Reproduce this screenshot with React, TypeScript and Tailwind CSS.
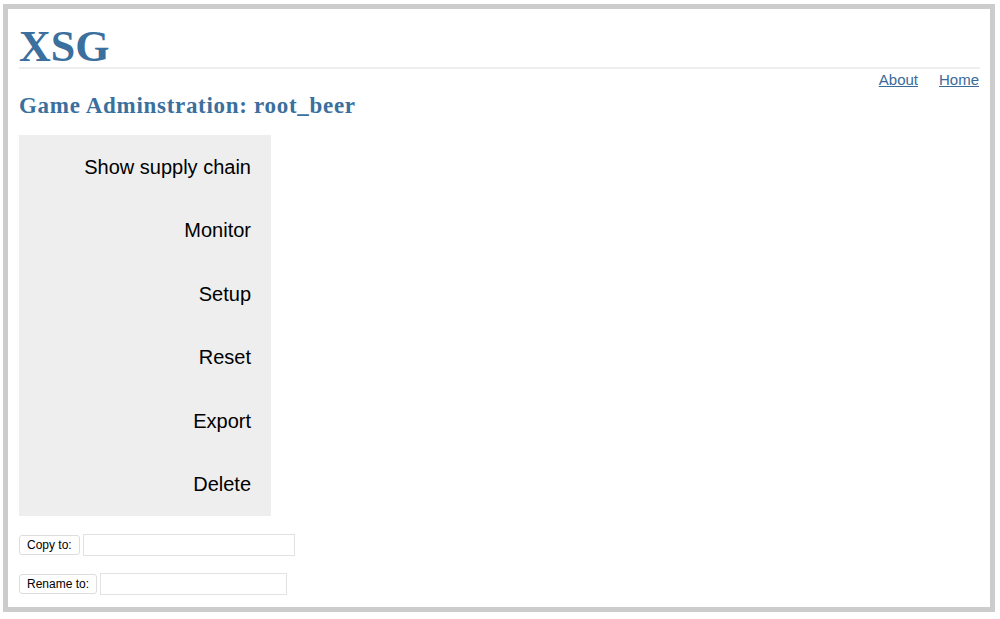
const menu = ["Show supply chain", "Monitor", "Setup", "Reset", "Export", "Delete"];

export default function App() {
  return (
    <div className="w-[1000px] h-[619px] bg-white pt-[4px] pl-[3px]" style={{ fontFamily: '"Liberation Sans", Arial, sans-serif' }}>
      <div className="w-[992px] h-[608px] border-[5px] border-[#cccccc] px-[11px] box-border">
        <div className="pt-[16px] border-b-2 border-[#eeeeee] h-[60px] mr-[-1px]">
          <h1 className="text-[44px] leading-[44px] font-bold text-[#3a6f9e]" style={{ fontFamily: '"Liberation Serif", Georgia, serif' }}>
            XSG
          </h1>
        </div>
        <div className="flex justify-end gap-[21px] text-[15px] leading-[20px] pt-[1px]">
          <a href="#" className="text-[#3a6a9a] underline">About</a>
          <a href="#" className="text-[#3a6a9a] underline">Home</a>
        </div>
        <h2 className="text-[23px] leading-[26px] tracking-[0.7px] font-bold text-[#3a6f9e] mt-[3px]" style={{ fontFamily: '"Liberation Serif", Georgia, serif' }}>
          Game Adminstration: root_beer
        </h2>
        <div className="mt-[16px] w-[252px] h-[381px] bg-[#eeeeee] flex flex-col pr-[20px]">
          {menu.map((m) => (
            <div key={m} className="flex-1 flex items-center justify-end text-[20px] text-black">
              {m}
            </div>
          ))}
        </div>
        <div className="mt-[18px] flex items-center">
          <button className="h-[20px] px-[7px] text-[12px] border border-[#dddddd] rounded-[3px] bg-white text-black">Copy to:</button>
          <input className="ml-[3px] w-[212px] h-[22px] border border-[#e2e2e2]" />
        </div>
        <div className="mt-[17px] flex items-center">
          <button className="h-[20px] px-[7px] text-[12px] border border-[#dddddd] rounded-[3px] bg-white text-black">Rename to:</button>
          <input className="ml-[3px] w-[187px] h-[22px] border border-[#e2e2e2]" />
        </div>
      </div>
    </div>
  );
}
